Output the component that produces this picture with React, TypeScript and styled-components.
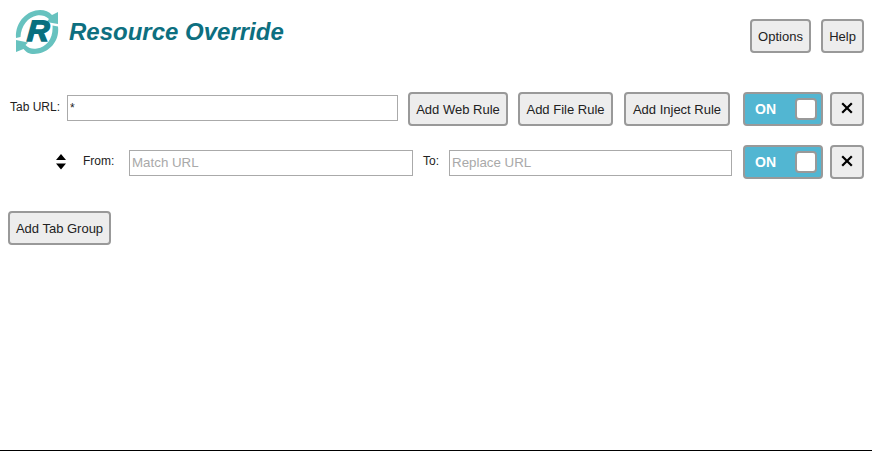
import React from "react";
import styled, { createGlobalStyle } from "styled-components";

const GlobalStyle = createGlobalStyle`
  * { box-sizing: border-box; }
  body {
    margin: 0;
    background: #fff;
    color: #222;
    font-family: "Liberation Sans", Arial, sans-serif;
  }
`;

const Page = styled.main`
  display: flex;
  flex-direction: column;
  height: 451px;
  padding: 0 8px;
  border-bottom: 1px solid #000;
`;

const Header = styled.header`
  display: flex;
  align-items: flex-start;
  height: 92px;
`;

const Logo = styled.svg`
  flex: none;
  width: 44px;
  height: 46px;
  margin: 9px 0 0 7px;
`;

const Title = styled.h1`
  flex: 1;
  margin: 18px 0 0 10px;
  font-size: 24px;
  line-height: 28px;
  font-style: italic;
  font-weight: bold;
  color: #0d6f80;
  white-space: nowrap;
`;

const HeaderActions = styled.div`
  display: flex;
  gap: 10px;
  margin-top: 19px;
`;

const Button = styled.button<{ $width: number }>`
  flex: none;
  display: flex;
  align-items: center;
  justify-content: center;
  width: ${(p) => p.$width}px;
  height: 34px;
  padding: 0;
  border: 2px solid #999;
  border-radius: 4px;
  background: #ededed;
  color: #222;
  font: 13px "Liberation Sans", Arial, sans-serif;
  white-space: nowrap;
`;

const DeleteButton = styled(Button)`
  padding-bottom: 2px;
`;

const Row = styled.div`
  display: flex;
  align-items: flex-start;
  height: 53px;
`;

const Label = styled.label<{ $left: number; $width: number; $top: number }>`
  flex: none;
  width: ${(p) => p.$width}px;
  margin: ${(p) => p.$top}px 0 0 ${(p) => p.$left}px;
  font-size: 12px;
  line-height: 14px;
  white-space: nowrap;
`;

const Field = styled.input<{ $width: number; $top: number; $size: string }>`
  flex: none;
  width: ${(p) => p.$width}px;
  height: 26px;
  margin: ${(p) => p.$top}px 0 0;
  padding: 0 2px 1px;
  border: 1px solid #aaa;
  border-radius: 0;
  background: #fff;
  color: #222;
  font: ${(p) => p.$size} "Liberation Sans", Arial, sans-serif;
  outline: none;
  &::placeholder {
    color: #a9a9a9;
    opacity: 1;
  }
`;

const RuleButtons = styled.div`
  display: grid;
  grid-template-columns: 100px 95px 106px;
  column-gap: 10px;
  width: 322px;
  margin-left: 10px;

  & > :last-child {
    justify-self: end;
    margin-right: -1px;
  }
`;

const Controls = styled.div`
  display: flex;
  gap: 7px;
  margin-left: auto;
`;

const Toggle = styled.button`
  display: flex;
  align-items: center;
  justify-content: space-between;
  width: 80px;
  height: 34px;
  padding: 0 4px 0 10px;
  border: 2px solid #999;
  border-radius: 4px;
  background: #52b6d2;
  color: #fff;
  font: bold 14px "Liberation Sans", Arial, sans-serif;
`;

const Knob = styled.span`
  width: 22px;
  height: 22px;
  border: 2px solid #999;
  border-radius: 4px;
  background: #fff;
`;

const SortHandle = styled.svg`
  flex: none;
  width: 10px;
  height: 16px;
  margin: 9px 0 0 48px;
`;

const Footer = styled.footer`
  display: flex;
  margin-top: 13px;
`;

const RowControls = () => (
  <Controls>
    <Toggle>
      ON
      <Knob />
    </Toggle>
    <DeleteButton $width={34} aria-label="Delete">
      <svg width="12" height="12" viewBox="0 0 12 12">
        <path d="M1.2 1.2 10.8 10.8M10.8 1.2 1.2 10.8" stroke="#000" strokeWidth="2.2" fill="none" />
      </svg>
    </DeleteButton>
  </Controls>
);

export default function App() {
  return (
    <>
      <GlobalStyle />
      <Page>
        <Header>
          <Logo viewBox="0 0 44 46">
            <g fill="#67c2bf">
              <path d="M1 29C0 12 13 1 25 1C30 1 34 2.500 37 6L43 3V15L31.500 13L34 10C30 6.500 26 6 22 6.500C13 8 6 17 5.500 28Z" />
              <path d="M43 17.500C45 34 32 45 19 45C14 45 11 43 8.500 40L1 43V31L13 33.500L10.500 36C14 39.500 18 40.300 22 39.500C32 38 38.500 29 37.500 16.500Z" />
            </g>
            <text
              transform="translate(11.400 32.300) skewX(-4) scale(1.040 1)"
              fontFamily="Liberation Sans, Arial, sans-serif"
              fontWeight="bold"
              fontStyle="italic"
              fontSize="29.500"
              fill="#08707f"
              stroke="#08707f"
              strokeWidth="1.400"
            >
              R
            </text>
          </Logo>
          <Title>Resource Override</Title>
          <HeaderActions>
            <Button $width={61}>Options</Button>
            <Button $width={43}>Help</Button>
          </HeaderActions>
        </Header>

        <Row>
          <Label $left={2} $width={57} $top={8}>Tab URL:</Label>
          <Field $width={331} $top={3} $size="12px" defaultValue="*" />
          <RuleButtons>
            <Button $width={100}>Add Web Rule</Button>
            <Button $width={95}>Add File Rule</Button>
            <Button $width={106}>Add Inject Rule</Button>
          </RuleButtons>
          <RowControls />
        </Row>

        <Row>
          <SortHandle viewBox="0 0 10 16">
            <path d="M5 0 10 6H0ZM0 9.500H10L5 15.500Z" fill="#000" />
          </SortHandle>
          <Label $left={17} $width={46} $top={9}>From:</Label>
          <Field $width={284} $top={5} $size="13.333px" placeholder="Match URL" />
          <Label $left={10} $width={26} $top={9}>To:</Label>
          <Field $width={283} $top={5} $size="13.333px" placeholder="Replace URL" />
          <RowControls />
        </Row>

        <Footer>
          <Button $width={103}>Add Tab Group</Button>
        </Footer>
      </Page>
    </>
  );
}
